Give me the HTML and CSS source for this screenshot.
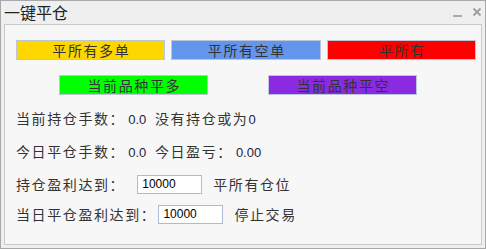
FILE: index.html
```html
<!DOCTYPE html>
<html lang="zh">
<head>
  <meta charset="UTF-8">
  <title>一键平仓</title>
  <link rel="stylesheet" href="styles.css">
</head>
<body>
  <div class="window">
    <div class="titlebar">
      <span class="title">一键平仓</span>
      <span class="tools">
        <span class="btn-min"></span>
        <svg class="btn-close" width="8" height="8" viewBox="0 0 8 8">
          <path d="M0.5 0.5 L7.5 7.5 M7.5 0.5 L0.5 7.5" stroke="#a0a0a0" stroke-width="2"/>
        </svg>
      </span>
    </div>

    <div class="panel">
      <div class="btn-row">
        <button class="btn yellow">平所有多单</button>
        <button class="btn blue">平所有空单</button>
        <button class="btn red">平所有</button>
      </div>
      <div class="btn-row second">
        <button class="btn green">当前品种平多</button>
        <button class="btn purple">当前品种平空</button>
      </div>

      <div class="info-row">
        <span class="label">当前持仓手数：</span><span class="num">0.0</span>
        <span class="label gap">没有持仓或为</span><span class="num tight">0</span>
      </div>
      <div class="info-row">
        <span class="label">今日平仓手数：</span><span class="num">0.0</span>
        <span class="label gap">今日盈亏：</span><span class="num">0.00</span>
      </div>

      <div class="form-row top">
        <span class="label">持仓盈利达到：</span>
        <input type="text" class="field first" value="10000">
        <span class="label after">平所有仓位</span>
      </div>
      <div class="form-row">
        <span class="label">当日平仓盈利达到：</span>
        <input type="text" class="field second" value="10000">
        <span class="label after">停止交易</span>
      </div>
    </div>
  </div>
</body>
</html>
```

FILE: styles.css
```css
html, body {
  margin: 0;
  padding: 0;
}

body {
  font-family: "Noto Sans CJK SC", "Noto Sans", sans-serif;
  color: #333;
  background: #fff;
}

.window {
  width: 486px;
  height: 249px;
  box-sizing: border-box;
  border: 1px solid #a8a8a8;
  background: #efefef;
  display: flex;
  flex-direction: column;
}

.titlebar {
  height: 23px;
  display: flex;
  align-items: center;
  justify-content: space-between;
  padding: 0 3px 0 3px;
}

.title {
  font-size: 16px;
  line-height: 23px;
  color: #222;
}

.tools {
  display: flex;
  align-items: center;
  gap: 11px;
  margin-bottom: 2px;
}

.btn-min {
  display: block;
  width: 9px;
  height: 2px;
  background: #a8a8a8;
  margin-top: 9px;
}

.btn-close {
  display: block;
  margin-right: 1px;
}

.panel {
  flex: 1;
  margin: 0 3px 3px 3px;
  border: 1px solid #c9c9c9;
  background: #f7f7f7;
  padding: 15px 0 0 11px;
}

.btn-row {
  display: flex;
  gap: 6px;
  height: 20px;
}

.btn-row.second {
  margin: 15px 0 6px 43px;
  gap: 60px;
}

.btn {
  width: 149px;
  height: 20px;
  padding: 0 0 0 1.6px;
  border: 1px solid #bcc6d8;
  font-family: "Noto Sans CJK SC", sans-serif;
  font-size: 14px;
  letter-spacing: 1.6px;
  line-height: 18px;
  color: #333;
  text-align: center;
}

.btn.blue {
  width: 150px;
}

.yellow { background: #ffd700; }
.blue { background: #6495ed; }
.red { background: #ff0000; }
.green { background: #00ff00; }
.purple { background: #8a2be2; }

.info-row {
  height: 33px;
  line-height: 33px;
  white-space: nowrap;
}

.form-row {
  height: 30px;
  display: flex;
  align-items: center;
}

.form-row.top {
  margin-top: 2px;
}

.label {
  font-size: 14px;
  letter-spacing: 1.6px;
  white-space: nowrap;
}

.label.gap {
  margin-left: 5px;
}

.num {
  font-family: "Liberation Sans", Arial, sans-serif;
  font-size: 13px;
  color: #1c1c44;
  margin-left: 3px;
}

.num.tight {
  margin-left: 0;
}

.field {
  width: 65px;
  height: 19px;
  box-sizing: border-box;
  border: 1px solid #a9bcd3;
  background: #fff;
  padding: 0 4px;
  font-family: "Liberation Sans", Arial, sans-serif;
  font-size: 12px;
  color: #000;
}

.field.first {
  margin-left: 12px;
}

.field.second {
  margin-left: 2px;
}

.label.after {
  margin-left: 11px;
}
```
